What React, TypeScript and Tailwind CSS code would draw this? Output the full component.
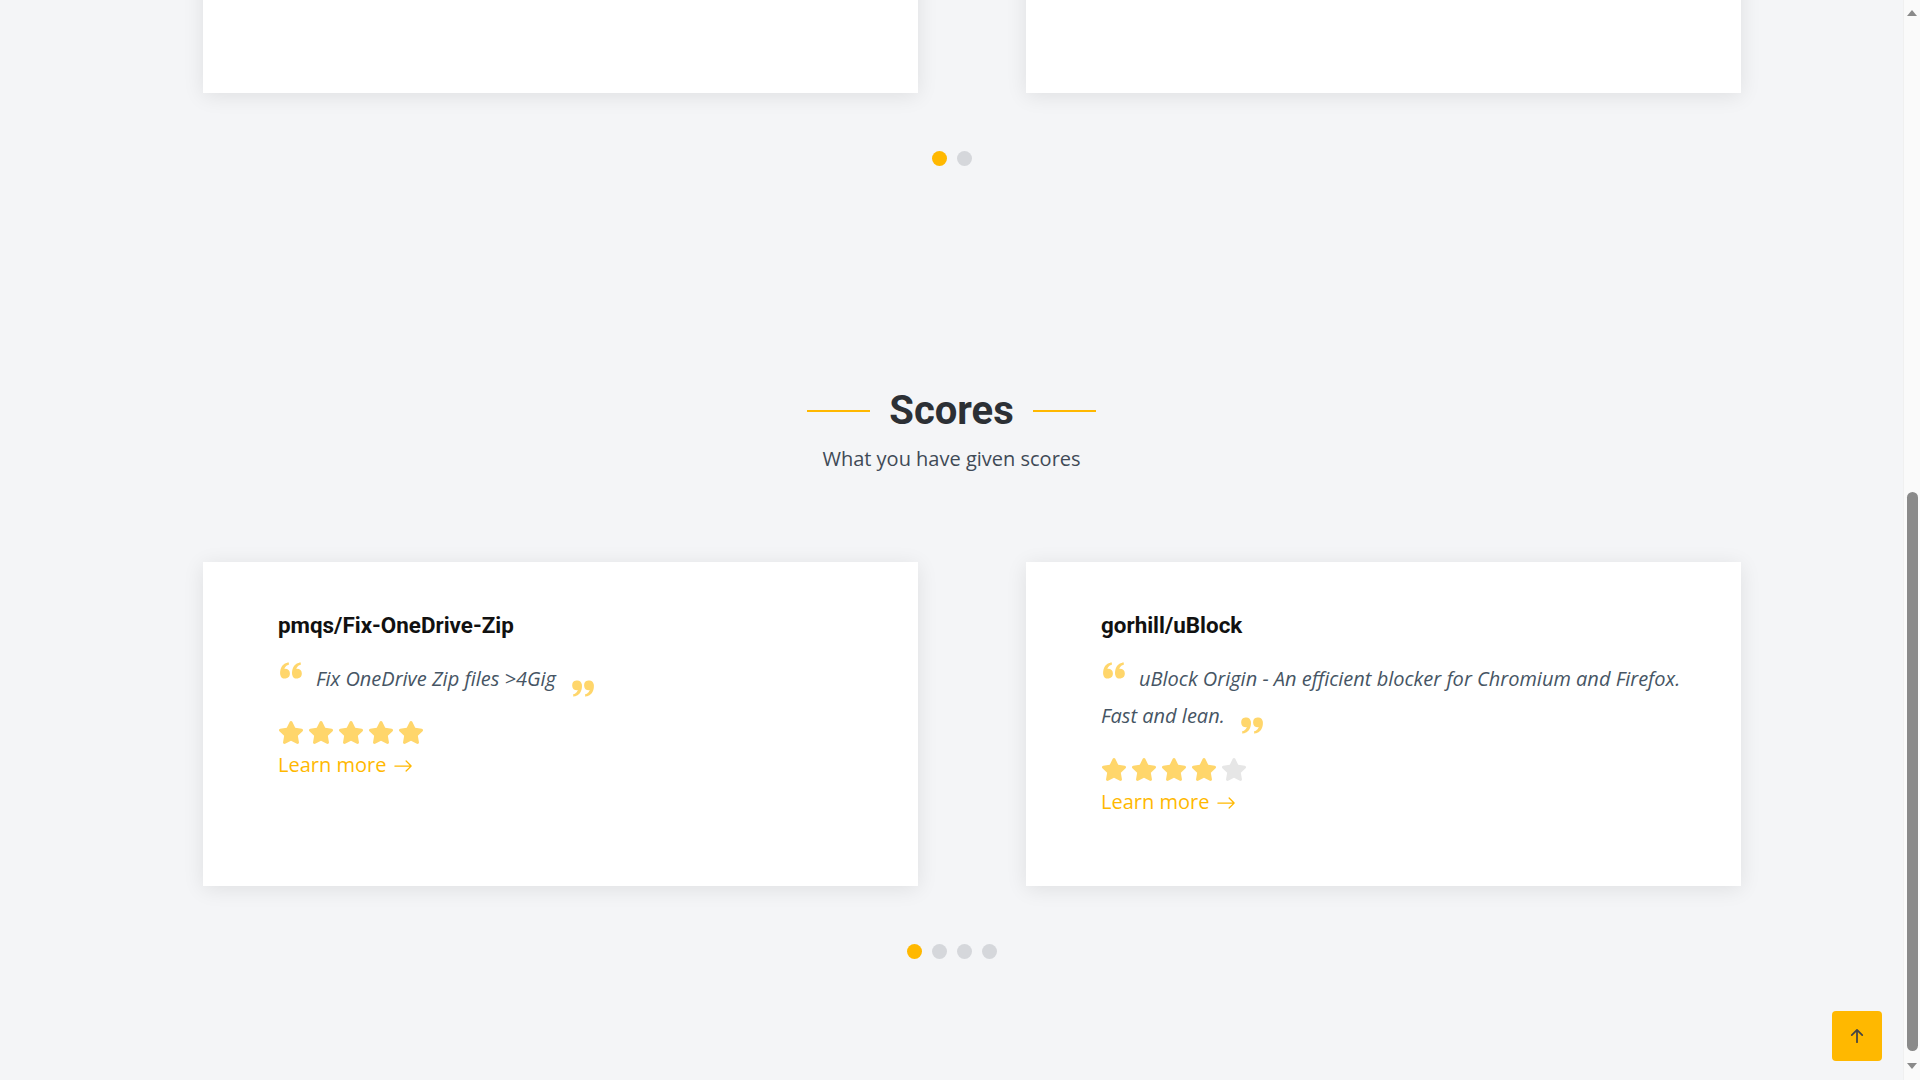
import { useLayoutEffect, useRef } from "react";
import { BiSolidQuoteAltLeft } from "react-icons/bi";
import { BsArrowRight, BsArrowUpShort } from "react-icons/bs";

interface Review {
  repo: string;
  text: string;
  stars: number;
}

const starred: Review[] = [
  { repo: "microsoft/vscode", text: "Visual Studio Code", stars: 5 },
  { repo: "facebook/react", text: "The library for web and native user interfaces.", stars: 5 },
];

const scores: Review[] = [
  { repo: "pmqs/Fix-OneDrive-Zip", text: "Fix OneDrive Zip files >4Gig", stars: 5 },
  {
    repo: "gorhill/uBlock",
    text: "uBlock Origin - An efficient blocker for Chromium and Firefox. Fast and lean.",
    stars: 4,
  },
];

function Star({ filled }: { filled: boolean }) {
  return (
    <svg viewBox="0 0 576 512" className="w-[26px] h-[23px]" fill={filled ? "#ffd66b" : "#e6e6e6"}>
      <path d="M259.3 17.8L194 150.2 47.9 171.5c-26.2 3.8-36.7 36.1-17.7 54.6l105.7 103-25 145.5c-4.5 26.3 23.2 46 46.4 33.7L288 439.6l130.7 68.7c23.2 12.2 50.9-7.4 46.4-33.7l-25-145.5 105.7-103c19-18.5 8.5-50.8-17.7-54.6L382 150.2 316.7 17.8c-11.7-23.6-45.6-23.9-57.4 0z" />
    </svg>
  );
}

function Card({ review }: { review: Review }) {
  return (
    <div className="w-[715px] h-[324px] shrink-0 bg-white shadow-[0_3px_20px_rgba(0,0,0,0.09)] pt-[50px] pl-[75px] pr-[45px]">
      <h3 className="font-['Roboto',sans-serif] font-bold text-[22.4px] leading-[26px] text-[#111]">
        {review.repo}
      </h3>
      <p className="mt-[22px] font-['Open_Sans',sans-serif] italic text-[20px] leading-[36px] text-[#465564]">
        <BiSolidQuoteAltLeft className="inline-block align-baseline text-[26px] text-[#ffd66b] mr-[12px] -translate-y-[2px]" />
        {review.text}
        <BiSolidQuoteAltLeft className="inline-block align-baseline text-[26px] text-[#ffd66b] ml-[14px] rotate-180 translate-y-[15px]" />
      </p>
      <div className="mt-[24px] flex gap-[4px]">
        {[0, 1, 2, 3, 4].map((i) => (
          <Star key={i} filled={i < review.stars} />
        ))}
      </div>
      <a
        href="#"
        className="mt-[6px] flex items-center gap-[7px] font-['Open_Sans',sans-serif] text-[20px] leading-[30px] text-[#ffb800]"
      >
        Learn more
        <BsArrowRight className="text-[20px] mt-[2px]" />
      </a>
    </div>
  );
}

function Dots({ count }: { count: number }) {
  return (
    <div className="mt-[58px] flex justify-center gap-[10px]">
      {Array.from({ length: count }).map((_, i) => (
        <span key={i} className={i === 0 ? "w-[15px] h-[15px] rounded-full bg-[#ffb800]" : "w-[15px] h-[15px] rounded-full bg-[#d5d7db]"} />
      ))}
    </div>
  );
}

function Section({ title, subtitle, items, dots }: { title: string; subtitle: string; items: Review[]; dots: number }) {
  return (
    <section className="pt-[100px] pb-[121px]">
      <div className="flex items-center justify-center gap-[19px]">
        <span className="w-[63px] h-[2px] bg-[#ffb800]" />
        <h2 className="font-['Roboto',sans-serif] font-bold text-[40px] leading-[48px] text-[#2c3035]">{title}</h2>
        <span className="w-[63px] h-[2px] bg-[#ffb800]" />
      </div>
      <p className="mt-[9px] text-center font-['Open_Sans',sans-serif] text-[20px] leading-[30px] text-[#3f4a56]">
        {subtitle}
      </p>
      <div className="mt-[88px] flex gap-[108px] pl-[203px]">
        {items.map((r) => (
          <Card key={r.repo} review={r} />
        ))}
      </div>
      <Dots count={dots} />
    </section>
  );
}

// window scrollbar as the browser draws it (page scrolled to the bottom)
function Scrollbar() {
  return (
    <div className="w-[17px] h-screen shrink-0 flex flex-col bg-[#fafafa] border-l border-[#f0f0f0]">
      <div className="h-[26px] flex items-center justify-center">
        <svg width="10" height="6" viewBox="0 0 10 6" fill="#8a8a8a">
          <path d="M5 0L10 6H0z" />
        </svg>
      </div>
      <div className="flex-1 flex flex-col items-center">
        <div className="mt-auto mb-[1px] w-[11px] h-[559px] rounded-full bg-[#8a8a8a]" />
      </div>
      <div className="h-[28px] flex items-center justify-center">
        <svg width="10" height="6" viewBox="0 0 10 6" fill="#8a8a8a">
          <path d="M0 0H10L5 6z" />
        </svg>
      </div>
    </div>
  );
}

export default function App() {
  const scrollRef = useRef<HTMLDivElement>(null);

  useLayoutEffect(() => {
    if (scrollRef.current) scrollRef.current.scrollTop = scrollRef.current.scrollHeight;
  }, []);

  return (
    <div className="flex h-screen overflow-hidden bg-[#f4f5f7]">
      <div ref={scrollRef} className="flex-1 h-screen overflow-y-scroll [scrollbar-width:none]">
        <header className="h-[439px] flex flex-col items-center justify-center gap-4 bg-[#2c3035]">
          <h1 className="font-['Roboto',sans-serif] font-bold text-[48px] text-white">My Repositories</h1>
          <p className="font-['Open_Sans',sans-serif] text-[20px] text-[#d5d7db]">Stars and scores in one place</p>
        </header>
        <Section title="Stars" subtitle="What you have starred" items={starred} dots={2} />
        <Section title="Scores" subtitle="What you have given scores" items={scores} dots={4} />
      </div>
      <Scrollbar />

      <a
        href="#"
        className="fixed bottom-[19px] right-[38px] w-[50px] h-[50px] rounded-[4px] bg-[#ffb800] flex items-center justify-center"
      >
        <BsArrowUpShort className="text-[28px] text-[#444]" />
      </a>
    </div>
  );
}
